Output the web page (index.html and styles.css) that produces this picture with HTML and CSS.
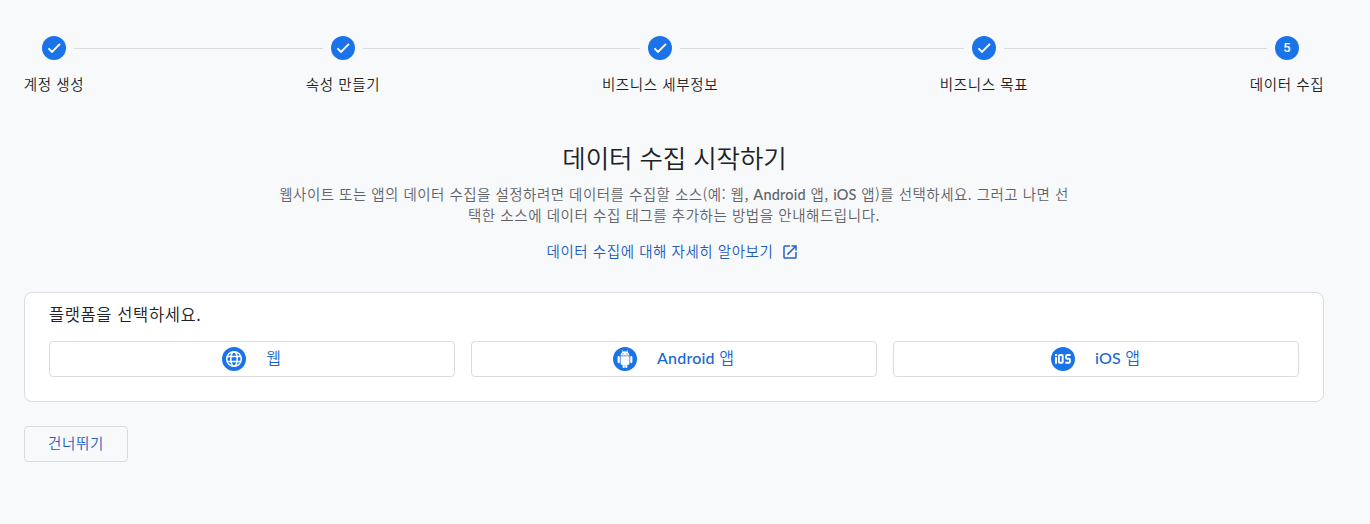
FILE: index.html
```html
<!DOCTYPE html>
<html lang="ko">
<head>
<meta charset="utf-8">
<title>데이터 수집 시작하기</title>
<link rel="stylesheet" href="styles.css">
</head>
<body>
<main class="page">
  <ol class="stepper">
    <li class="step step-account">
      <div class="step-head"><i class="rule blank"></i><span class="dot"><svg viewBox="0 0 24 24"><path d="M6.500 12.300l3.500 3.500L18 7.800"/></svg></span><i class="rule"></i></div>
      <span class="step-label">계정 생성</span>
    </li>
    <li class="link"></li>
    <li class="step step-property">
      <div class="step-head"><i class="rule"></i><span class="dot"><svg viewBox="0 0 24 24"><path d="M6.500 12.300l3.500 3.500L18 7.800"/></svg></span><i class="rule"></i></div>
      <span class="step-label">속성 만들기</span>
    </li>
    <li class="link"></li>
    <li class="step step-details">
      <div class="step-head"><i class="rule"></i><span class="dot"><svg viewBox="0 0 24 24"><path d="M6.500 12.300l3.500 3.500L18 7.800"/></svg></span><i class="rule"></i></div>
      <span class="step-label">비즈니스 세부정보</span>
    </li>
    <li class="link"></li>
    <li class="step step-goals">
      <div class="step-head"><i class="rule"></i><span class="dot"><svg viewBox="0 0 24 24"><path d="M6.500 12.300l3.500 3.500L18 7.800"/></svg></span><i class="rule"></i></div>
      <span class="step-label">비즈니스 목표</span>
    </li>
    <li class="link"></li>
    <li class="step step-data">
      <div class="step-head"><i class="rule"></i><span class="dot">5</span><i class="rule blank"></i></div>
      <span class="step-label">데이터 수집</span>
    </li>
  </ol>

  <header class="intro">
    <h1 class="title">데이터 수집 시작하기</h1>
    <p class="lead">웹사이트 또는 앱의 데이터 수집을 설정하려면 데이터를 수집할 소스(예: 웹, <span class="latin">Android</span> 앱, <span class="latin">iOS</span> 앱)를 선택하세요. 그러고 나면 선<br><span class="lead-end">택한 소스에 데이터 수집 태그를 추가하는 방법을 안내해드립니다.</span></p>
    <a class="more"><span>데이터 수집에 대해 자세히 알아보기</span><svg class="open" viewBox="0 0 24 24"><path d="M19 19H5V5h7V3H5a2 2 0 0 0-2 2v14a2 2 0 0 0 2 2h14c1.1 0 2-.9 2-2v-7h-2v7zM14 3v2h3.59l-9.83 9.83 1.41 1.41L19 6.41V10h2V3h-7z"/></svg></a>
  </header>

  <section class="card">
    <h2 class="card-title">플랫폼을 선택하세요.</h2>
    <div class="platforms">
      <button class="platform">
        <svg class="icon" viewBox="0 0 24 24"><circle cx="12" cy="12" r="12" fill="#1a73e8"/><g fill="none" stroke="#fff" stroke-width="1.5"><circle cx="12" cy="12" r="7.3"/><ellipse cx="12" cy="12" rx="3.2" ry="7.3"/><path d="M5.1 9.6h13.8M5.1 14.4h13.8"/></g></svg>
        <span class="platform-name web">웹</span>
      </button>
      <button class="platform">
        <svg class="icon" viewBox="0 0 24 24"><circle cx="12" cy="12" r="12" fill="#1a73e8"/><g fill="#fff"><path d="M7.6 8.6C7.6 6.700 8.600 5.400 9.700 4.700L8.700 3.500l.5-.4 1.200 1.300a5 5 0 0 1 3.200 0l1.200-1.300.5.4-1 1.200c1.100.7 2.100 2 2.100 3.900z"/><path d="M7.600 9.200h8.800v7.500a1 1 0 0 1-1 1h-1v2.200a1.100 1.100 0 0 1-2.200 0v-2.200h-.4v2.200a1.100 1.100 0 0 1-2.200 0v-2.200h-1a1 1 0 0 1-1-1z"/><rect x="4.600" y="9" width="2.200" height="7.200" rx="1.100"/><rect x="17.200" y="9" width="2.200" height="7.200" rx="1.100"/></g><g fill="#1a73e8"><circle cx="10" cy="6.700" r=".55"/><circle cx="14" cy="6.700" r=".55"/></g></svg>
        <span class="platform-name"><span class="latin">Android</span> 앱</span>
      </button>
      <button class="platform">
        <svg class="icon" viewBox="0 0 24 24"><circle cx="12" cy="12" r="12" fill="#1a73e8"/><g fill="none" stroke="#fff" stroke-width="1.900"><path d="M5 10v6.800M5 7v1.900M8.700 8h2.200q.8 0 .8.800v6.200q0 .8-.8.800H8.700q-.8 0-.8-.8V8.800q0-.8.8-.8zM19.600 8h-3.400q-1.100 0-1.100 1v1.700q0 1 1.100 1h1.600q1.100 0 1.100 1v2.100q0 1-1.100 1h-3.500"/></g></svg>
        <span class="platform-name"><span class="latin">iOS</span> 앱</span>
      </button>
    </div>
  </section>

  <button class="skip">건너뛰기</button>
</main>
</body>
</html>
```
FILE: styles.css
```css
* { box-sizing: border-box; }

body {
  margin: 0;
  background: #f8f9fb;
  color: #202124;
  font-family: "Noto Sans CJK KR", sans-serif;
  font-weight: 350;
  font-size: 14.5px;
}

.page {
  width: 1348px;
  height: 524px;
  padding: 36px 24px 0;
}

.stepper {
  display: flex;
  margin: 0;
  padding: 0;
  list-style: none;
}

.step { flex: none; }
.step-account { width: 60px; }
.step-property, .step-data { width: 74px; }
.step-details { width: 116px; }
.step-goals { width: 88px; }

.link {
  flex: 1;
  height: 1px;
  margin-top: 12px;
  background: #dadce0;
}

.step-head {
  display: flex;
  gap: 8px;
  height: 24px;
}

.rule {
  flex: 1;
  height: 1px;
  margin-top: 12px;
  background: #dadce0;
}
.blank { background: none; }

.dot {
  display: flex;
  align-items: center;
  justify-content: center;
  width: 24px;
  height: 24px;
  border-radius: 50%;
  background: #1a73e8;
  color: #fff;
  font: 500 13px/24px Roboto, sans-serif;
}
.dot svg {
  width: 24px;
  height: 24px;
  fill: none;
  stroke: #fff;
  stroke-width: 1.9;
}

.step-label {
  display: flex;
  justify-content: center;
  margin-top: 14px;
  line-height: 20px;
  letter-spacing: .6px;
  white-space: nowrap;
}

.intro {
  display: flex;
  flex-direction: column;
  align-items: center;
  margin-top: 45px;
}

.title {
  margin: 0;
  padding-left: 1px;
  font-size: 25.5px;
  font-weight: 350;
  line-height: 36px;
  letter-spacing: -.1px;
}

.lead {
  margin: 9px 0 0;
  color: #5f6368;
  line-height: 20px;
  letter-spacing: .48px;
  text-align: center;
  white-space: nowrap;
}
.lead-end { letter-spacing: .56px; }

.latin {
  font-family: Lato, sans-serif;
  font-weight: 500;
  letter-spacing: .2px;
}

.more {
  display: flex;
  align-items: center;
  gap: 8px;
  margin-top: 16px;
  padding-right: 2px;
  color: #1f5bc0;
  line-height: 20px;
  letter-spacing: .55px;
}
.open {
  width: 18px;
  height: 18px;
  margin-top: 2px;
  fill: #2962c4;
}

.card {
  height: 110px;
  margin-top: 31px;
  padding: 9px 24px 0;
  border: 1px solid #dadce0;
  border-radius: 8px;
  background: #fff;
}

.card-title {
  margin: 0;
  font-size: 16.5px;
  font-weight: 350;
  line-height: 24px;
  letter-spacing: .6px;
}

.platforms {
  display: grid;
  grid-template-columns: repeat(3, 1fr);
  gap: 16px;
  margin-top: 15px;
}

.platform {
  display: flex;
  align-items: center;
  justify-content: center;
  gap: 20px;
  height: 36px;
  padding: 0 1px 0 0;
  border: 1px solid #dadce0;
  border-radius: 4px;
  background: #fff;
  color: #1967d2;
  font: 350 16px/24px "Noto Sans CJK KR", sans-serif;
}
.platform-name { padding-bottom: 3px; }
.web { padding-bottom: 5px; }
.icon {
  width: 24px;
  height: 24px;
}

.skip {
  width: 104px;
  height: 36px;
  margin-top: 24px;
  padding: 0 0 2px;
  border: 1px solid #dadce0;
  border-radius: 4px;
  background: none;
  color: #1e5bbf;
  font: 350 14.5px/20px "Noto Sans CJK KR", sans-serif;
  letter-spacing: .7px;
}
```
